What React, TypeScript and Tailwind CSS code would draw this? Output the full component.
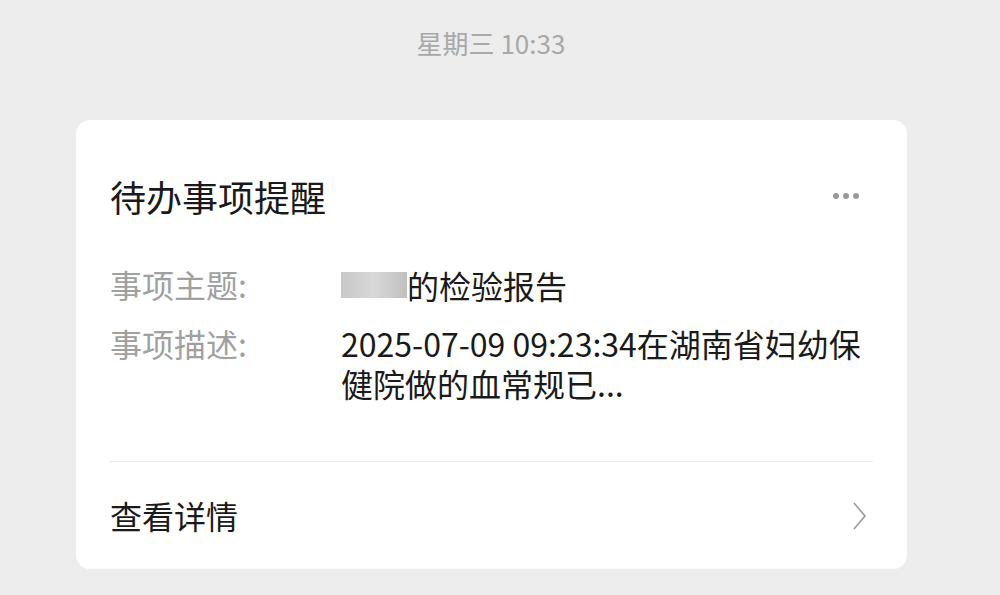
import React from 'react';

const font = { fontFamily: '"Noto Sans CJK SC", "Noto Sans", sans-serif' };

function Row({ label, children }: { label: string; children: React.ReactNode }) {
  return (
    <div className="flex">
      <div className="w-[231px] shrink-0 text-[#a0a0a0]">{label}</div>
      <div className="flex-1 text-[#1a1a1a]">{children}</div>
    </div>
  );
}

export default function App() {
  return (
    <div className="w-[1000px] h-[595px] bg-[#ededed] overflow-hidden" style={font}>
      <div className="h-[120px] pt-[25px] pr-[18px] text-center text-[26px] leading-[36px] text-[#a8a8a8]">星期三 10:33</div>
      <div className="mx-[76px] w-[831px] bg-white rounded-[14px] px-[34px]">
        <div className="flex items-center justify-between pt-[54px]">
          <div className="text-[36px] leading-[44px] text-[#1a1a1a]">待办事项提醒</div>
          <div className="flex gap-[4px] mr-[14px]">
            <span className="w-[6px] h-[6px] rounded-full bg-[#999]" />
            <span className="w-[6px] h-[6px] rounded-full bg-[#999]" />
            <span className="w-[6px] h-[6px] rounded-full bg-[#999]" />
          </div>
        </div>
        <div className="mt-[46px] text-[32px] leading-[40px] flex flex-col gap-[18px] pb-[58px]">
          <Row label="事项主题:">
            <span className="inline-flex items-center">
              <span className="inline-block w-[66px] h-[26px] bg-gradient-to-r from-[#c8c8c8] via-[#d8d8d8] to-[#c0c0c0]" />
              的检验报告
            </span>
          </Row>
          <Row label="事项描述:">2025-07-09 09:23:34在湖南省妇幼保健院做的血常规已...</Row>
        </div>
        <div className="border-t border-[#ececec] flex items-center justify-between h-[108px]">
          <div className="text-[32px] leading-[40px] text-[#1a1a1a] -mt-[2px]">查看详情</div>
          <svg width="20" height="32" viewBox="0 0 20 32" className="mr-[4px]">
            <path d="M5 3 L16 16 L5 29" fill="none" stroke="#9a9a9a" strokeWidth="1.6" />
          </svg>
        </div>
      </div>
    </div>
  );
}
